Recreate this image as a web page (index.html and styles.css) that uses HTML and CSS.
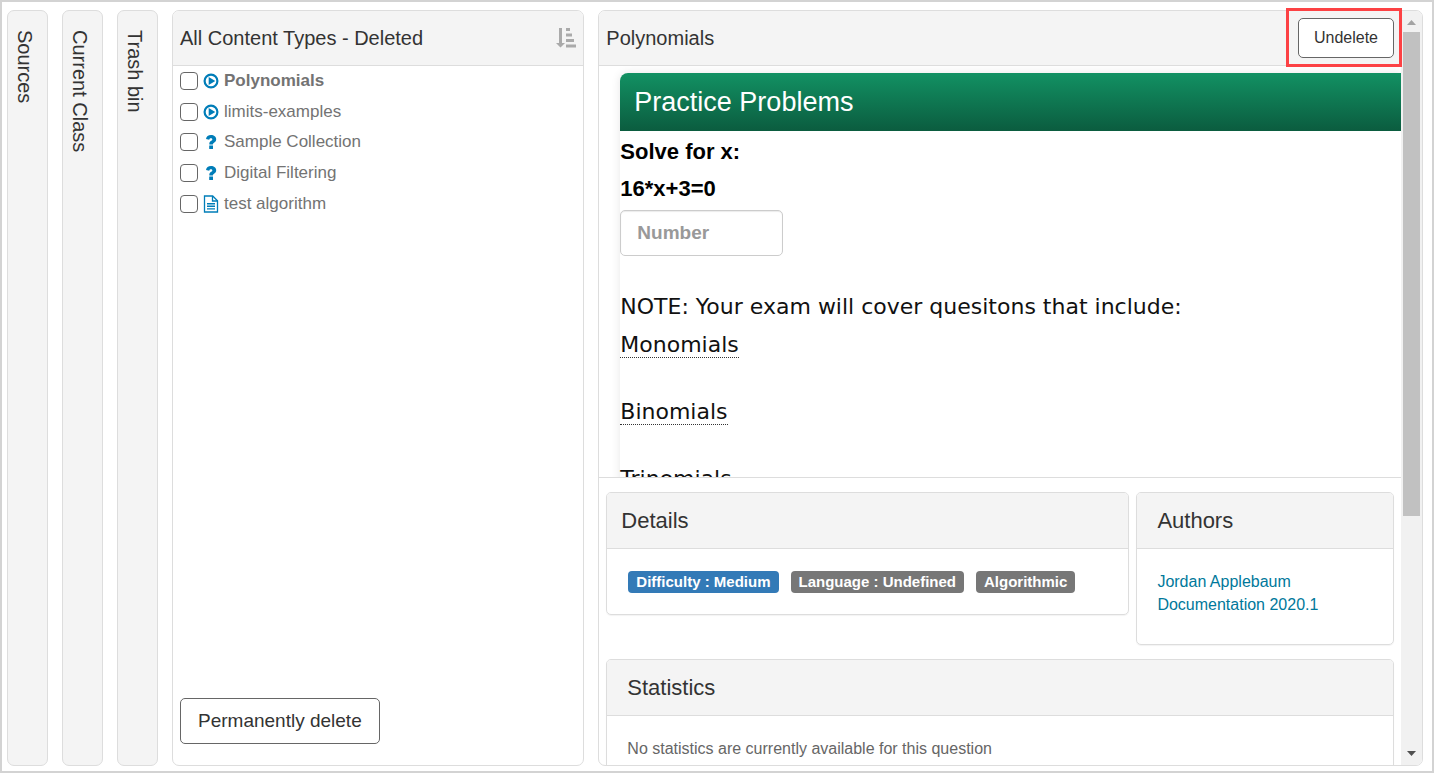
FILE: index.html
```html
<!DOCTYPE html>
<html lang="en">
<head>
<meta charset="utf-8">
<meta name="viewport" content="width=device-width, initial-scale=1.0">
<title>Content Manager</title>
<link rel="stylesheet" href="styles.css">
</head>

<body>

<!--shared icons-->
<svg class="sprite" aria-hidden="true">
  <symbol id="icon-play" viewBox="0 0 16 16">
    <circle cx="8" cy="8" r="6.400" fill="none" stroke="currentColor" stroke-width="2.200"/>
    <path d="M5.700 4v8L12.300 8z" fill="currentColor"/>
  </symbol>
  <symbol id="icon-question" viewBox="0 0 16 16">
    <path d="M3 5C3.400 2.300 5.200 1 8 1c3 0 5.200 1.700 5.200 4.200 0 1.800-1 2.700-2.100 3.500-.9.600-1.200.9-1.200 1.700v.2H6.300V10c0-1.700.8-2.500 1.900-3.200.8-.5 1.100-.8 1.100-1.400 0-.700-.5-1.100-1.300-1.100-1 0-1.400.5-1.800 1.400zM6.200 11.500h3.800v3.500H6.200z" fill="currentColor"/>
  </symbol>
  <symbol id="icon-file" viewBox="0 0 16 18">
    <path d="M1.500 1h8.200l4.800 4.800V17h-13z" fill="none" stroke="currentColor" stroke-width="1.300"/>
    <path d="M9.500 1v5h5" fill="none" stroke="currentColor" stroke-width="1.300"/>
    <path d="M4 8.700h8M4 11.300h8M4 13.900h8" stroke="currentColor" stroke-width="1.400"/>
  </symbol>
</svg>

<div class="frame">

  <a class="tab" href="#sources"><span>Sources</span></a>
  <a class="tab" href="#class"><span>Current Class</span></a>
  <a class="tab" href="#trash"><span>Trash bin</span></a>

  <!--list of deleted items-->
  <section class="panel">
    <header class="panel-header">
      <h1>All Content Types - Deleted</h1>
      <button class="sort-btn" type="button" aria-label="Sort">
        <svg width="20" height="20" viewBox="0 0 20 20" fill="currentColor">
          <path d="M3 0h3v15h3L4.500 19.500 0 15h3zM10 0h4v3h-4zM10 5.500h6v3h-6zM10 11h8v3h-8zM10 16.500h10v3H10z"/>
        </svg>
      </button>
    </header>
    <ul class="items">
      <li>
        <input type="checkbox" id="item1">
        <svg class="icon"><use href="#icon-play"/></svg>
        <label for="item1"><b>Polynomials</b></label>
      </li>
      <li>
        <input type="checkbox" id="item2">
        <svg class="icon"><use href="#icon-play"/></svg>
        <label for="item2">limits-examples</label>
      </li>
      <li>
        <input type="checkbox" id="item3">
        <svg class="icon"><use href="#icon-question"/></svg>
        <label for="item3">Sample Collection</label>
      </li>
      <li>
        <input type="checkbox" id="item4">
        <svg class="icon"><use href="#icon-question"/></svg>
        <label for="item4">Digital Filtering</label>
      </li>
      <li>
        <input type="checkbox" id="item5">
        <svg class="icon icon-file"><use href="#icon-file"/></svg>
        <label for="item5">test algorithm</label>
      </li>
    </ul>
    <footer class="panel-footer">
      <button class="btn btn-lg" type="button">Permanently delete</button>
    </footer>
  </section>

  <!--selected item-->
  <section class="panel preview">
    <div class="preview-body">
      <header class="panel-header">
        <h2>Polynomials</h2>
        <span class="marked"><button class="btn" type="button">Undelete</button></span>
      </header>

      <div class="question-wrap">
        <div class="question">
          <h3 class="question-title">Practice Problems</h3>
          <p class="solve">Solve for x:</p>
          <p class="solve">16*x+3=0</p>
          <input class="answer" type="text" placeholder="Number" aria-label="Number">
          <p class="note">NOTE: Your exam will cover quesitons that include:</p>
          <ul class="terms">
            <li><span>Monomials</span></li>
            <li><span>Binomials</span></li>
            <li><span>Trinomials</span></li>
          </ul>
        </div>
      </div>

      <div class="cards">
        <div class="card details">
          <h3>Details</h3>
          <div class="card-body">
            <span class="label label-primary">Difficulty : Medium</span>
            <span class="label">Language : Undefined</span>
            <span class="label">Algorithmic</span>
          </div>
        </div>
        <div class="card authors">
          <h3>Authors</h3>
          <div class="card-body">
            <a href="#author">Jordan Applebaum</a>
            <a href="#docs">Documentation 2020.1</a>
          </div>
        </div>
        <div class="card statistics">
          <h3>Statistics</h3>
          <div class="card-body">No statistics are currently available for this question</div>
        </div>
      </div>
    </div>

    <div class="scrollbar" aria-hidden="true">
      <svg class="arrow-up" width="9" height="5" viewBox="0 0 9 5"><path d="M0 5L4.500 0 9 5z" fill="currentColor"/></svg>
      <div class="track"><div class="thumb"></div></div>
      <svg class="arrow-down" width="9" height="5" viewBox="0 0 9 5"><path d="M0 0h9L4.500 5z" fill="currentColor"/></svg>
    </div>
  </section>

</div>

</body>
</html>
```
FILE: styles.css
```css
* {box-sizing: border-box;}

body{
  margin:0;
  background:#fff;
  color:#333;
  font-family:"Liberation Sans", Arial, sans-serif;
  font-size:16px;
}

h1, h2, h3, p, ul{
  margin:0;
  padding:0;
  font-weight:normal;
}

ul{
  list-style:none;
}

a{
  color:#00789b;
  text-decoration:none;
}

.sprite{
  display:none;
}

.frame{
  display:grid;
  grid-template-columns:41px 41px 41px 1fr 2fr;
  grid-template-rows:minmax(0, 1fr);
  gap:14px;
  height:100vh;
  padding:8px 9px 5px 5px;
  border:2px solid #d3d3d3;
}

/*collapsed columns on the left*/

.tab{
  padding:19px 6px;
  border:1px solid #ddd;
  border-radius:7px;
  background:#f4f4f4;
  color:#333;
  font-size:20px;
  line-height:22px;
}

.tab span{
  writing-mode:vertical-rl;
}

/*panels*/

.panel{
  display:flex;
  flex-direction:column;
  min-width:0;
  border:1px solid #ddd;
  border-radius:7px;
}

.panel-header{
  display:flex;
  align-items:center;
  justify-content:space-between;
  height:55px;
  padding:0 7px;
  border-bottom:1px solid #ddd;
  border-radius:6px 6px 0 0;
  background:#f4f4f4;
}

.panel-header h1, .panel-header h2{
  font-size:20px;
}

.sort-btn{
  display:flex;
  padding:0;
  border:0;
  background:none;
  color:#aaa;
}

.panel-footer{
  margin-top:auto;
  padding:0 7px 21px;
}

.btn{
  height:40px;
  padding:0 15px;
  border:1px solid #666;
  border-radius:5px;
  background:#fff;
  color:#333;
  font-family:inherit;
  font-size:16px;
}

.btn-lg{
  height:46px;
  padding:0 17px;
  font-size:19px;
}

.items{
  display:grid;
  grid-auto-rows:1fr;
  height:153px;
  padding:0 7px;
  color:#737373;
  font-size:17px;
}

.items li{
  display:flex;
  align-items:center;
}

.items input{
  appearance:none;
  width:18px;
  height:18px;
  margin:0 5px 0 0;
  border:1px solid #666;
  border-radius:4px;
  background:#fff;
}

.icon{
  width:16px;
  height:16px;
  margin-right:5px;
  color:#007db8;
}

.icon-file{
  height:18px;
}

/*preview column*/

.preview{
  flex-direction:row;
}

.preview-body{
  display:flex;
  flex:1;
  flex-direction:column;
  min-width:0;
}

.preview .panel-header{
  flex:none;
  border-radius:6px 0 0 0;
}

/*red frame round the button*/
.marked{
  position:relative;
}

.marked::after{
  content:"";
  position:absolute;
  inset:-10px -8px -9px -12px;
  border:3px solid #fc4144;
  pointer-events:none;
}

.question-wrap{
  flex:none;
  height:412px;
  padding:7px 0 0 21px;
  overflow:hidden;
  border-bottom:1px solid #ddd;
}

.question{
  height:600px;
  border-radius:8px 0 0 0;
  box-shadow:0 0 10px rgba(0,0,0,0.1);
  color:#000;
}

.question-title{
  padding:0 14px;
  border-radius:8px 0 0 0;
  background:linear-gradient(#129163, #0b5c3f);
  color:#fff;
  font-size:27px;
  line-height:58px;
}

.solve{
  padding-top:4px;
  font-size:22px;
  font-weight:bold;
  line-height:33px;
}

.answer{
  display:block;
  width:163px;
  height:46px;
  margin:5px 0 32px;
  padding:0 16px;
  border:1px solid #ccc;
  border-radius:5px;
  background:#fff;
  box-shadow:inset 0 1px 1px rgba(0,0,0,0.08);
  font-family:inherit;
  font-size:19px;
  font-weight:bold;
}

.answer::placeholder{
  color:#999;
  opacity:1;
}

.note, .terms{
  font-family:"DejaVu Sans", Verdana, sans-serif;
  font-size:22px;
  line-height:38px;
  color:#111;
}

.terms li{
  margin-bottom:29px;
}

.terms span{
  border-bottom:1px dotted #333;
}

/*cards below the question*/

.cards{
  display:grid;
  flex:1;
  grid-template-columns:67fr 33fr;
  align-content:start;
  align-items:start;
  gap:14px 7px;
  min-height:0;
  padding:14px 7px 0;
  overflow:hidden;
}

.card{
  border:1px solid #ddd;
  border-radius:5px;
  box-shadow:0 1px 1px rgba(0,0,0,0.05);
  color:#666;
}

.card h3{
  padding:0 20px;
  border-bottom:1px solid #ddd;
  border-radius:4px 4px 0 0;
  background:#f4f4f4;
  color:#333;
  font-size:22px;
  line-height:55px;
}

.card-body{
  padding:21px 20px;
  line-height:23px;
}

.details h3{
  padding:0 14px;
}

.details .card-body{
  display:flex;
  flex-wrap:wrap;
  gap:12px;
  padding:22px 21px 21px;
}

.label{
  padding:0 8px;
  border-radius:4px;
  background:#777;
  color:#fff;
  font-size:15px;
  font-weight:bold;
  line-height:22px;
}

.label-primary{
  background:#337ab7;
}

.authors a{
  display:block;
}

.authors .card-body{
  padding-bottom:28px;
}

.statistics{
  grid-column:1 / 3;
}

/*scrollbar*/

.scrollbar{
  display:flex;
  flex-direction:column;
  align-items:center;
  width:21px;
  padding:9px 2px;
  border-radius:0 6px 6px 0;
  background:#f1f1f1;
}

.track{
  flex:1;
  width:17px;
  margin:7px 0;
}

.thumb{
  height:68%;
  background:#c1c1c1;
}

.arrow-up{
  color:#a3a3a3;
}

.arrow-down{
  color:#505050;
}
```
